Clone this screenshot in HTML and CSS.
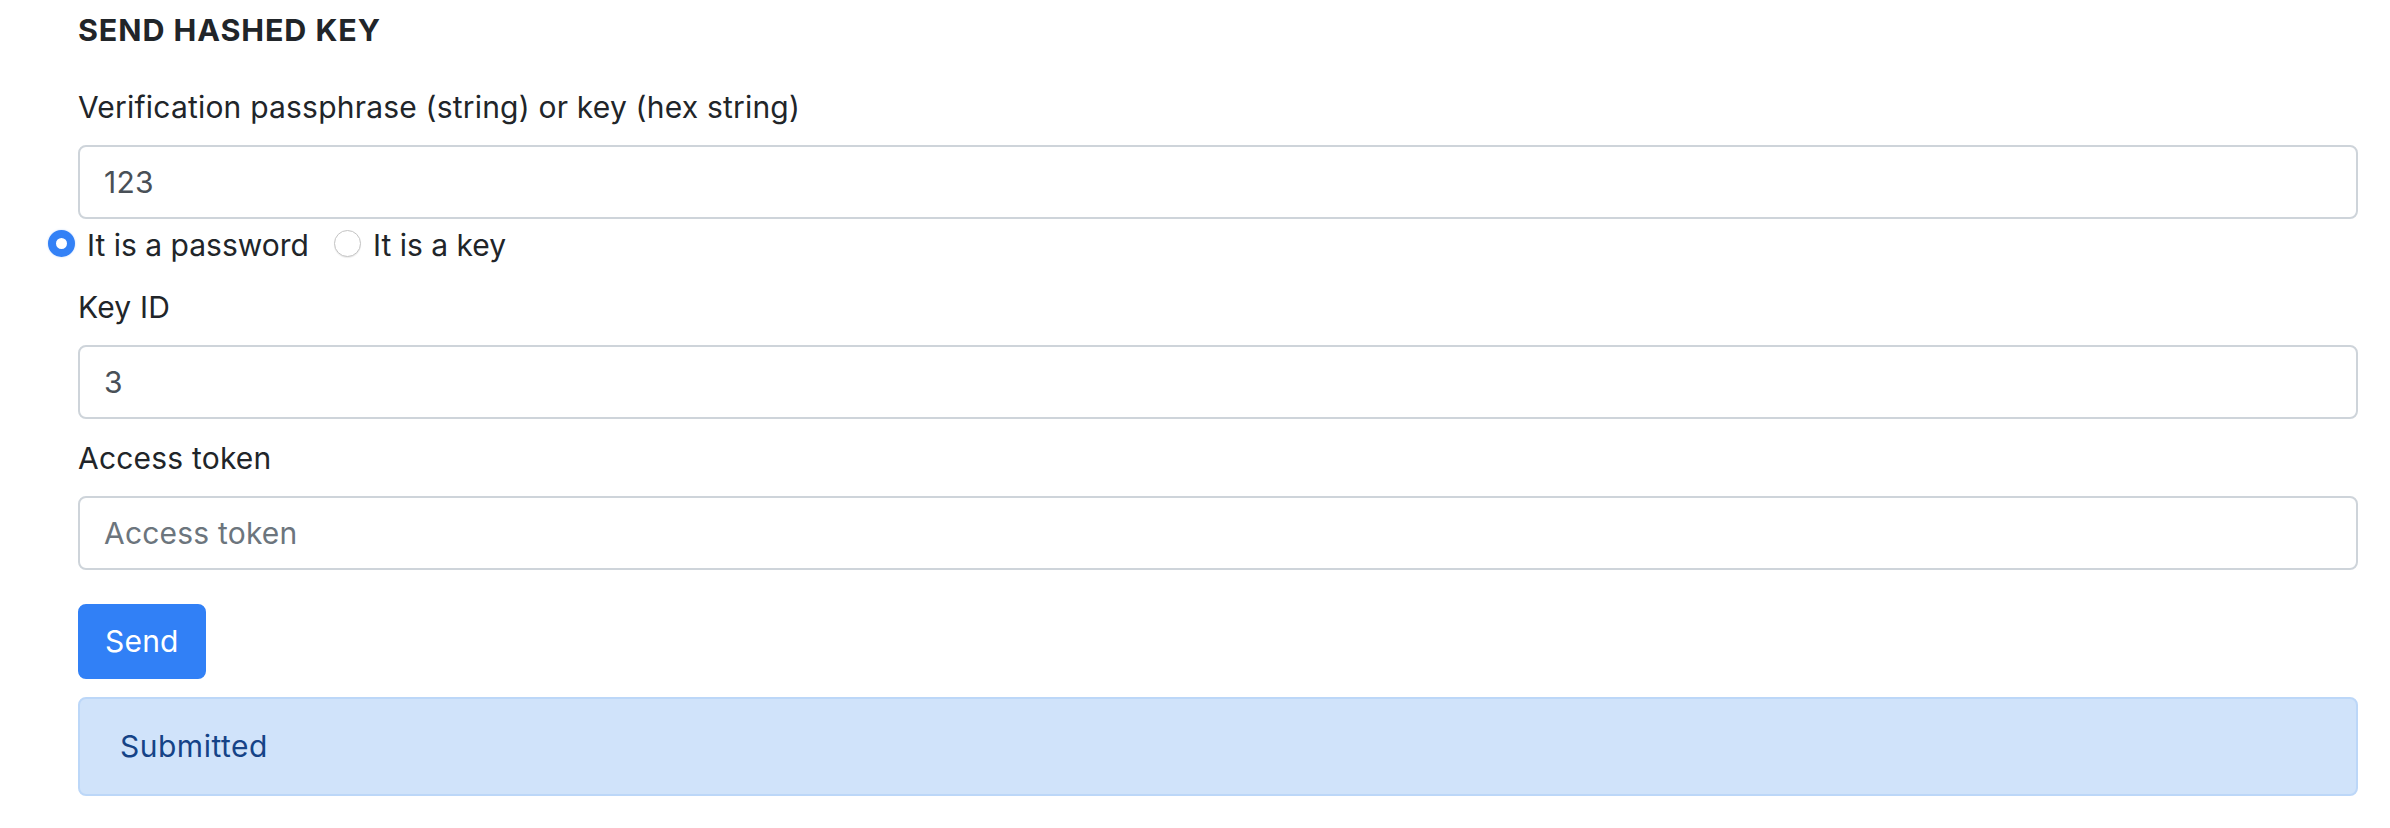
FILE: index.html
```html
<!DOCTYPE html>
<html lang="en">
<head>
<meta charset="utf-8">
<title>Send hashed key</title>
<link rel="stylesheet" href="styles.css">
</head>
<body>
<main class="page">
  <h6 class="title">SEND HASHED KEY</h6>
  <form class="form">
    <div class="group group-first">
      <label class="label" for="pass">Verification passphrase (string) or key (hex string)</label>
      <input class="field" id="pass" type="text" value="123">
    </div>
    <div class="radios">
      <label class="radio-item">
        <input class="radio" type="radio" name="kind" checked>
        <span class="radio-text">It is a password</span>
      </label>
      <label class="radio-item">
        <input class="radio" type="radio" name="kind">
        <span class="radio-text">It is a key</span>
      </label>
    </div>
    <div class="group">
      <label class="label" for="keyid">Key ID</label>
      <input class="field" id="keyid" type="text" value="3">
    </div>
    <div class="group">
      <label class="label" for="token">Access token</label>
      <input class="field" id="token" type="text" placeholder="Access token">
    </div>
    <button class="btn" type="button">Send</button>
    <div class="alert">Submitted</div>
  </form>
</main>
</body>
</html>
```

FILE: styles.css
```css
* {
  box-sizing: border-box;
}

html, body {
  margin: 0;
  padding: 0;
  background: #ffffff;
}

body {
  font-family: Inter, "Liberation Sans", Arial, sans-serif;
  font-size: 30px;
  letter-spacing: 0.2px;
  color: #212529;
}

.page {
  padding: 0 32px 32px 48px;
}

.title {
  margin: 12px 0 37px 30px;
  font-size: 30.5px;
  line-height: 36px;
  font-weight: 700;
  letter-spacing: 0.9px;
  color: #212529;
}

.form {
  display: flex;
  flex-direction: column;
}

.group {
  display: flex;
  flex-direction: column;
  margin: 0 0 17px 30px;
}

.group-first {
  margin-bottom: 0;
}

.label {
  display: block;
  line-height: 45px;
  margin-bottom: 15px;
  color: #212529;
}

.field {
  display: block;
  width: 100%;
  height: 74px;
  padding: 0 24px;
  border: 2px solid #ced4da;
  border-radius: 8px;
  background: #ffffff;
  font-family: inherit;
  font-size: 30px;
  letter-spacing: 0.2px;
  color: #495057;
  outline: none;
}

.field::placeholder {
  color: #6c757d;
  opacity: 1;
}

.radios {
  display: flex;
  align-items: flex-start;
  height: 45px;
  margin: 4px 0 17px 0;
  line-height: 45px;
}

.radio-item {
  display: flex;
  align-items: flex-start;
  margin-right: 25px;
}

.radio {
  appearance: none;
  -webkit-appearance: none;
  flex: none;
  width: 27px;
  height: 27px;
  margin: 7px 12px 0 0;
  border-radius: 50%;
  border: 1px solid #c4c4c4;
  background: #ffffff;
  box-shadow: 0 1px 1px rgba(0, 0, 0, 0.08);
}

.radio:checked {
  border: 8.5px solid #3381f6;
  background: #ffffff;
  box-shadow: 0 0 2px rgba(51, 129, 246, 0.35);
}

.radio-text {
  color: #212529;
  letter-spacing: 0;
}

.btn {
  align-self: flex-start;
  margin: 17px 0 0 30px;
  height: 75px;
  padding: 0 25px;
  border: 2px solid #3180f6;
  border-radius: 8px;
  background: #3180f6;
  color: #ffffff;
  font-family: inherit;
  font-size: 30px;
  letter-spacing: 0.2px;
  line-height: 71px;
}

.alert {
  margin: 18px 0 0 30px;
  padding: 24px 40px;
  border: 2px solid #bcd7f8;
  border-radius: 8px;
  background: #d0e3fa;
  color: #154387;
  letter-spacing: 0.5px;
  line-height: 47px;
}
```
